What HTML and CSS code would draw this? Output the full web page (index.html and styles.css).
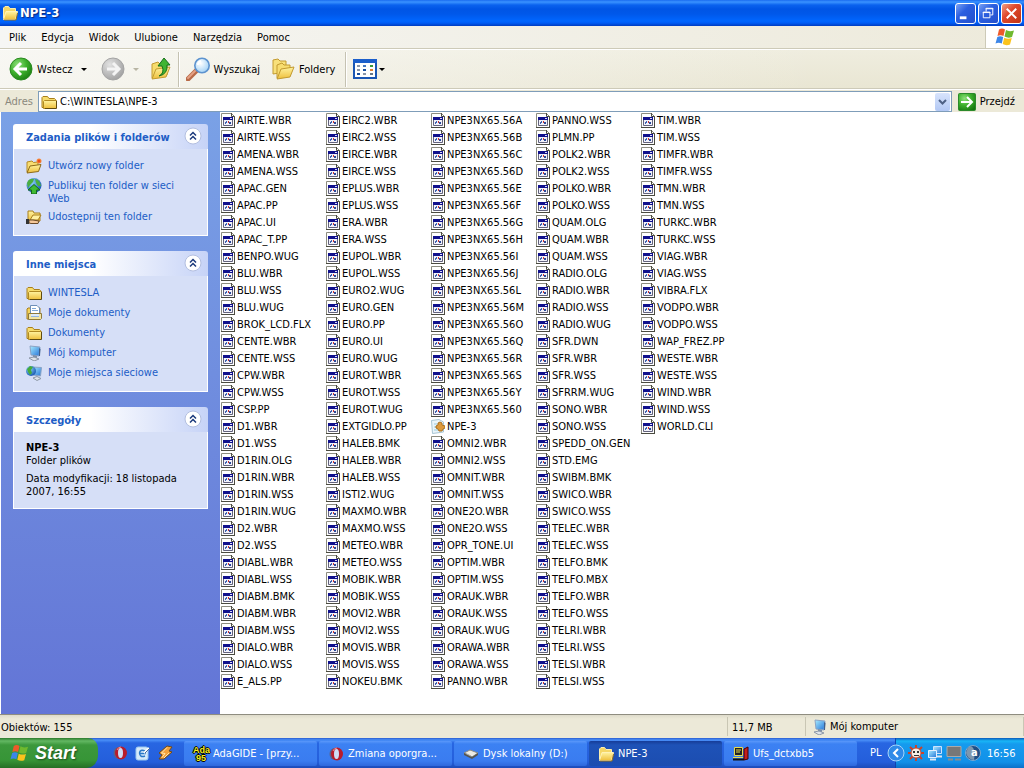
FILE: index.html
```html
<!DOCTYPE html>
<html lang="pl">
<head>
    <meta charset="UTF-8">
    <meta name="viewport" content="width=device-width, initial-scale=1.0">
    <title>NPE-3</title>
    <link rel="stylesheet" href="styles.css">
</head>
<body>
    <svg class="sprite" aria-hidden="true">
        <defs>
            <linearGradient id="gFolder" x1="0" y1="0" x2="0" y2="1">
                <stop offset="0" stop-color="#fff3a0"/>
                <stop offset="1" stop-color="#eebf3c"/>
            </linearGradient>
            <radialGradient id="gGreen" cx="0.35" cy="0.3" r="0.8">
                <stop offset="0" stop-color="#8ee07a"/>
                <stop offset="0.5" stop-color="#3db02c"/>
                <stop offset="1" stop-color="#16780f"/>
            </radialGradient>
            <radialGradient id="gGray" cx="0.35" cy="0.3" r="0.8">
                <stop offset="0" stop-color="#e2e2e2"/>
                <stop offset="1" stop-color="#9c9c9c"/>
            </radialGradient>
            <radialGradient id="gLens" cx="0.4" cy="0.35" r="0.7">
                <stop offset="0" stop-color="#ffffff"/>
                <stop offset="1" stop-color="#9fd0f5"/>
            </radialGradient>
            <linearGradient id="gScreen" x1="0" y1="0" x2="1" y2="1">
                <stop offset="0" stop-color="#a8ecff"/>
                <stop offset="1" stop-color="#2474d8"/>
            </linearGradient>
            <radialGradient id="gGlobe" cx="0.35" cy="0.3" r="0.8">
                <stop offset="0" stop-color="#8ad0ff"/>
                <stop offset="1" stop-color="#104fa8"/>
            </radialGradient>
        </defs>
        <symbol id="folder" viewBox="0 0 16 16">
            <path d="M1 13.500V3.500L2 2.500H6.500L8 4.500H13.500L14.500 5.500V13.500Z" fill="#f7dc6c" stroke="#a87f1c"/>
            <path d="M3.500 6.500H15.500V13.500L14.500 14.500H2.500V7.500Z" fill="url(#gFolder)" stroke="#b08a24"/>
            <path d="M4 14.500H15.500V7" fill="none" stroke="#5f4a10"/>
        </symbol>
        <symbol id="folder-open" viewBox="0 0 16 16">
            <path d="M1 13V3.500H6L7.500 5H13V13Z" fill="#f8dd70" stroke="#b58a26"/>
            <path d="M1 14.500L4 7.500H15.500L12.500 14.500Z" fill="url(#gFolder)" stroke="#a87f1c"/>
        </symbol>
        <symbol id="folder-light" viewBox="0 0 16 16">
            <path d="M1.500 13V3L3 1.500H6.500L8 3.500H13.500V13Z" fill="#f5d767" stroke="#fbeeb0"/>
            <path d="M1.500 14.500L4 6.500H15.500L13.500 14.500Z" fill="url(#gFolder)" stroke="#fff2b4"/>
            <path d="M2 15H14L15.500 8" fill="none" stroke="#94701c"/>
        </symbol>
        <symbol id="new-folder" viewBox="0 0 16 16">
            <path d="M1 14V4L6 3L7.500 4.500L12 4V12Z" fill="#f8dd70" stroke="#b58a26"/>
            <path d="M1 15L4 8L15 6.500L12.500 13.500Z" fill="url(#gFolder)" stroke="#8d6a18"/>
            <circle cx="13" cy="3" r="2.500" fill="#f58a3c"/>
            <circle cx="13" cy="3" r="1.500" fill="#ee4a18"/>
        </symbol>
        <symbol id="share" viewBox="0 0 16 16">
            <path d="M2 12V2H7L8 4H14V12Z" fill="url(#gFolder)" stroke="#a87f1c"/>
            <path d="M4 11L7 6H15L12 11Z" fill="#fff0a0" stroke="#a87f1c"/>
            <path d="M3 11H7L13 12L12 14.500H5L3 14Z" fill="#f5c89a" stroke="#6a4a2a"/>
            <path d="M0 10H3V15H0Z" fill="#343434"/>
        </symbol>
        <symbol id="publish" viewBox="0 0 16 16">
            <circle cx="8" cy="7.500" r="7.500" fill="url(#gGlobe)"/>
            <path d="M1 5Q3 0 8 1L7 4L4 7L2 10ZM9 1Q14 2 15 8L12 8L10 5Z" fill="#4aae42"/>
            <path d="M8 6.500L14 12H10.500V16H5.500V12H2Z" fill="#3fba34" stroke="#14691a"/>
        </symbol>
        <symbol id="my-docs" viewBox="0 0 16 16">
            <path d="M1 14V4L2 3H14V14Z" fill="#f3d35c" stroke="#a87f1c"/>
            <path d="M4.500 9V0.500H11L13.500 3V9Z" fill="#fff" stroke="#6d8fb8"/>
            <path d="M6 3.500H10M6 5.500H12" stroke="#7fa8d8"/>
            <path d="M2.500 8.500H15.500V13.500L14.500 14.500H2.500Z" fill="#f3e6a4" stroke="#8e7a3c"/>
            <path d="M5 9H13V12H5Z" fill="#dcebfb"/>
            <path d="M5 11.500H13" stroke="#93b5df"/>
        </symbol>
        <symbol id="computer" viewBox="0 0 16 16">
            <path d="M4 1L14 2L13 11L5 10Z" fill="url(#gScreen)" stroke="#8ba3c4"/>
            <path d="M13 3L14.500 4L14 11L13 11Z" fill="#3f5f8c"/>
            <path d="M7 10L11 11V13H7Z" fill="#7d8fa8"/>
            <path d="M3 13L8 12L13 14L8 16Z" fill="#dfe4ea" stroke="#8d98a8"/>
        </symbol>
        <symbol id="network" viewBox="0 0 16 16">
            <path d="M6 2L15.500 2.500L14.500 11L7 10Z" fill="url(#gScreen)" stroke="#8ba3c4"/>
            <path d="M7 13L11 11.500L15 13.500L11 15.500Z" fill="#dfe4ea" stroke="#8d98a8"/>
            <circle cx="5" cy="6" r="5" fill="url(#gGlobe)"/>
            <path d="M1 4L4 1L7 2L5 5L6 8L4 10L2 7Z" fill="#46ab3a"/>
        </symbol>
        <symbol id="two-pcs" viewBox="0 0 16 16">
            <path d="M6.500 1.500H14.500V8.500H6.500Z" fill="url(#gScreen)" stroke="#c9e2ff"/>
            <path d="M1.500 5.500H9.500V12.500H1.500Z" fill="url(#gScreen)" stroke="#e4f0ff"/>
            <path d="M3 14.500H9M10 11.500H15" stroke="#dbe6f4" stroke-width="2"/>
        </symbol>
        <symbol id="file" viewBox="0 0 14 16">
            <path d="M0.500 0.500H10.500L13.500 3.500V14.500H0.500Z" fill="#fff" stroke="#8c8c80"/>
            <path d="M10.500 0V3.500H13.500V15M0 14.500H14" fill="none" stroke="#4a4a40"/>
            <path d="M2.500 4.500H11.500V12.500H2.500Z" fill="#f2f2fa" stroke="#62627c"/>
            <path d="M2 4H12V7H2Z" fill="#10108c"/>
            <path d="M9 5H11V6H9Z" fill="#d8d8f0"/>
            <path d="M4 9H5V11H4ZM5 8H6V10H5Z" fill="#3d62b0"/>
            <path d="M7 8H8V10H7Z" fill="#c33"/>
            <path d="M8 9H10V11H8Z" fill="#2a4a9a"/>
        </symbol>
        <symbol id="reg-file" viewBox="0 0 14 16">
            <path d="M0.500 1.500L8 0.500L12.500 3V13L1.500 14.500Z" fill="#eaf5fa" stroke="#a8c6d4"/>
            <path d="M3 5H6M3 8H5M3 11H7" stroke="#9acbe0"/>
            <path d="M5 7L7 6V4L9 3L11 4V6L14 7V9L12 10L11 12H8L7 10L5 9Z" fill="#dd9a3c" stroke="#a8701f"/>
        </symbol>
        <symbol id="back" viewBox="0 0 24 24">
            <circle cx="12" cy="12" r="11" fill="url(#gGreen)" stroke="#2a8a20"/>
            <path d="M12 6L6 12L12 18M7 12H18" fill="none" stroke="#fff" stroke-width="3"/>
        </symbol>
        <symbol id="forward" viewBox="0 0 24 24">
            <circle cx="12" cy="12" r="11" fill="url(#gGray)" stroke="#a4a4a4"/>
            <path d="M12 6L18 12L12 18M17 12H6" fill="none" stroke="#f4f4f4" stroke-width="3"/>
        </symbol>
        <symbol id="up" viewBox="0 0 24 24">
            <path d="M3 21V7L9 5L11 7L18 6V18Z" fill="#f7dc6c" stroke="#c29a30"/>
            <path d="M3 22L7 12L21 10L17 20Z" fill="url(#gFolder)" stroke="#c29a30"/>
            <path d="M10 19Q16 16 13 9H9L15 1L21 8H18Q19 17 10 19Z" fill="#3fb432" stroke="#17701a"/>
        </symbol>
        <symbol id="search" viewBox="0 0 24 24">
            <path d="M2 22L10 14" stroke="#b96a48" stroke-width="5" stroke-linecap="round"/>
            <path d="M2 21L9 14" stroke="#e5a184" stroke-width="2" stroke-linecap="round"/>
            <circle cx="16" cy="8.500" r="7.200" fill="url(#gLens)" stroke="#5d93cf" stroke-width="1.600"/>
            <path d="M12 8Q12 5 15 4" fill="none" stroke="#fff" stroke-width="2"/>
        </symbol>
        <symbol id="folders" viewBox="0 0 24 24">
            <path d="M2 17V3L7 2L9 4H15V15Z" fill="#f8e07a" stroke="#c29a30"/>
            <path d="M6 21V8L11 6L13 8H19V19Z" fill="#f8dd70" stroke="#c29a30"/>
            <path d="M6 22L10 12L23 10L19 20Z" fill="url(#gFolder)" stroke="#c29a30"/>
        </symbol>
        <symbol id="views" viewBox="0 0 24 20">
            <path d="M1 1H23V19H1Z" fill="#fff" stroke="#1a56b4" stroke-width="2"/>
            <path d="M0 0H24V4H0Z" fill="#1c5fcb"/>
            <path d="M4 6H7V8H4ZM4 10H7V12H4ZM10 14H13V16H10Z" fill="#8a96a8"/>
            <path d="M10 6H13V8H10Z" fill="#4a78c0"/>
            <path d="M17 6H20V8H17Z" fill="#3a9a3a"/>
            <path d="M10 10H13V12H10ZM4 14H7V16H4Z" fill="#174d9e"/>
            <path d="M17 10H20V12H17Z" fill="#e08030"/>
            <path d="M17 14H20V16H17Z" fill="#667788"/>
        </symbol>
        <symbol id="go" viewBox="0 0 18 18">
            <rect x="0.500" y="0.500" width="17" height="17" rx="1" fill="url(#gGreen)" stroke="#2b8a2b"/>
            <path d="M9 4L14 9L9 14M13 9H3" fill="none" stroke="#fff" stroke-width="2"/>
        </symbol>
        <symbol id="flag" viewBox="0 0 20 18">
            <path d="M4 1.500Q7 -0.500 10 1.500L8.500 8Q5.500 6.500 2.500 8Z" fill="#ee5a2a"/>
            <path d="M11 2Q14 4 19 2.500L17 9Q13 10.500 9.500 8.500Z" fill="#6fb92e"/>
            <path d="M2.300 9Q5 7.500 8.200 9L6.800 15.500Q3.500 14 0.500 15.500Z" fill="#3c86e8"/>
            <path d="M9.200 9.700Q13 11.500 16.800 10L15 16.500Q11 18 7.700 16Z" fill="#fbc31c"/>
        </symbol>
        <symbol id="chevrons" viewBox="0 0 18 18">
            <circle cx="9" cy="9" r="8" fill="#fff" stroke="#b3bfe0"/>
            <path d="M6 8.500L9 5.500L12 8.500M6 12.500L9 9.500L12 12.500" fill="none" stroke="#1c3a7c" stroke-width="1.500"/>
        </symbol>
        <symbol id="opera" viewBox="0 0 16 16">
            <ellipse cx="6.500" cy="8" rx="5" ry="6" fill="#5a6288"/>
            <ellipse cx="9" cy="8" rx="6" ry="6.500" fill="#b81c2c"/>
            <ellipse cx="8.500" cy="8" rx="2.500" ry="5" fill="#cfdcf5"/>
            <path d="M5 5Q6 2 9 2" fill="none" stroke="#f08a90"/>
        </symbol>
        <symbol id="desktop" viewBox="0 0 16 16">
            <rect x="1" y="2" width="12" height="13" rx="2" fill="#d6eafa" stroke="#9cc8ee"/>
            <path d="M10 6Q5 4 4.500 8Q5 13 10 11M5 8.500H10V7" fill="none" stroke="#2a78c8" stroke-width="1.500"/>
            <path d="M9 8L14 3" stroke="#fff" stroke-width="2"/>
            <path d="M10 8L15 3" stroke="#4a6a98"/>
        </symbol>
        <symbol id="winamp" viewBox="0 0 16 16">
            <path d="M9 1L14 2L11 6L14 7L6 14L1 14L4 10L1 8Z" fill="#f3a23c" stroke="#6e4a1c"/>
            <path d="M9 2.500L3.500 8L7 8.500L4 12.500M11 8L6 13" fill="none" stroke="#ffe7b0"/>
        </symbol>
        <symbol id="drive" viewBox="0 0 16 16">
            <path d="M1 7L7 4L15 7L9 11Z" fill="#ecebe4" stroke="#8c8c84"/>
            <path d="M1 7V9L9 13L15 9V7L9 11Z" fill="#55554f"/>
            <path d="M3 7.500L8 10" stroke="#aaa"/>
        </symbol>
        <symbol id="ufs" viewBox="0 0 16 16">
            <path d="M1.500 1.500H9.500V9.500H1.500Z" fill="#222" stroke="#e8dc50"/>
            <path d="M3 4H8M3 6H7" stroke="#e8dc50"/>
            <path d="M0 11.500H10" stroke="#e8dc50"/>
            <path d="M0 13.500H11" stroke="#111" stroke-width="2"/>
            <path d="M11 3L15 1V13L11 14Z" fill="#c41e1e" stroke="#400"/>
        </symbol>
        <symbol id="bug" viewBox="0 0 16 16">
            <path d="M8 0V16M0 8H16M2 2L14 14M14 2L2 14" stroke="#c8442c" stroke-width="2"/>
            <circle cx="8" cy="8" r="5" fill="#f4eee4" stroke="#c8442c"/>
            <path d="M5 6H7V8H5ZM9 6H11V8H9ZM6 10H11V11H6Z" fill="#333"/>
        </symbol>
        <symbol id="monitor" viewBox="0 0 16 16">
            <path d="M1 1.500H15V11.500H1Z" fill="#777" stroke="#a9a9a9"/>
            <path d="M2 14.500H7M9 14.500H15" stroke="#8c8c8c" stroke-width="2"/>
        </symbol>
        <symbol id="ball" viewBox="0 0 16 16">
            <circle cx="8" cy="8" r="7.500" fill="#1f4f86" stroke="#7fa9d0"/>
            <path d="M5 1Q11 2 9 15Q3 15 1 8Q2 3 5 1Z" fill="#7f97ad"/>
        </symbol>
    </svg>

    <header class="titlebar">
        <svg class="icon"><use href="#folder-light"/></svg>
        <h1>NPE-3</h1>
        <button class="win-button" aria-label="Minimalizuj"><svg viewBox="0 0 20 20"><path d="M4 13H11V16H4Z" fill="#fff"/></svg></button>
        <button class="win-button" aria-label="Przywróć"><svg viewBox="0 0 20 20"><path d="M7.500 8V4.500H14.500V11.500H12M7 5H15M4.500 8.500H11.500V14.500H4.500ZM4 9H12" fill="none" stroke="#fff"/></svg></button>
        <button class="win-button close" aria-label="Zamknij"><svg viewBox="0 0 20 20"><path d="M5 5L15 15M15 5L5 15" stroke="#fff" stroke-width="2"/></svg></button>
    </header>

    <nav class="menubar">
        <button>Plik</button>
        <button>Edycja</button>
        <button>Widok</button>
        <button>Ulubione</button>
        <button>Narzędzia</button>
        <button>Pomoc</button>
        <span class="brand"><svg><use href="#flag"/></svg></span>
    </nav>

    <div class="toolbar">
        <button class="tool"><svg><use href="#back"/></svg>Wstecz<i class="arrow"></i></button>
        <button class="tool forward" aria-label="Dalej" disabled><svg><use href="#forward"/></svg><i class="arrow"></i></button>
        <button class="tool" aria-label="W górę"><svg><use href="#up"/></svg></button>
        <span class="divider"></span>
        <button class="tool search"><svg><use href="#search"/></svg>Wyszukaj</button>
        <button class="tool folders"><svg><use href="#folders"/></svg>Foldery</button>
        <span class="divider"></span>
        <button class="tool views" aria-label="Widoki"><svg><use href="#views"/></svg><i class="arrow"></i></button>
    </div>

    <div class="addressbar">
        <label for="adres">Adres</label>
        <div class="combo">
            <svg class="icon"><use href="#folder"/></svg>
            <input type="text" id="adres" value="C:\WINTESLA\NPE-3">
            <button aria-label="Rozwiń"><svg viewBox="0 0 15 18"><path d="M4 7L7.500 10.500L11 7" fill="none" stroke="#4d6185" stroke-width="2"/></svg></button>
        </div>
        <button class="go"><svg><use href="#go"/></svg>Przejdź</button>
    </div>

    <main class="main">
        <aside class="sidebar">
            <section class="panel">
                <div class="panel-head">
                    <h2>Zadania plików i folderów</h2>
                    <button aria-label="Zwiń"><svg><use href="#chevrons"/></svg></button>
                </div>
                <ul class="panel-body">
                    <li><svg class="icon"><use href="#new-folder"/></svg><a href="#">Utwórz nowy folder</a></li>
                    <li><svg class="icon"><use href="#publish"/></svg><a href="#">Publikuj ten folder w sieci Web</a></li>
                    <li><svg class="icon"><use href="#share"/></svg><a href="#">Udostępnij ten folder</a></li>
                </ul>
            </section>
            <section class="panel">
                <div class="panel-head">
                    <h2>Inne miejsca</h2>
                    <button aria-label="Zwiń"><svg><use href="#chevrons"/></svg></button>
                </div>
                <ul class="panel-body">
                    <li><svg class="icon"><use href="#folder"/></svg><a href="#">WINTESLA</a></li>
                    <li><svg class="icon"><use href="#my-docs"/></svg><a href="#">Moje dokumenty</a></li>
                    <li><svg class="icon"><use href="#folder"/></svg><a href="#">Dokumenty</a></li>
                    <li><svg class="icon"><use href="#computer"/></svg><a href="#">Mój komputer</a></li>
                    <li><svg class="icon"><use href="#network"/></svg><a href="#">Moje miejsca sieciowe</a></li>
                </ul>
            </section>
            <section class="panel">
                <div class="panel-head">
                    <h2>Szczegóły</h2>
                    <button aria-label="Zwiń"><svg><use href="#chevrons"/></svg></button>
                </div>
                <div class="panel-body details">
                    <p><b>NPE-3</b><br>Folder plików</p>
                    <p>Data modyfikacji: 18 listopada 2007, 16:55</p>
                </div>
            </section>
        </aside>
        <ul class="files" id="files"></ul>
    </main>

    <footer class="statusbar">
        <span class="count">Obiektów: 155</span>
        <span class="size">11,7 MB</span>
        <span class="zone"><svg class="icon"><use href="#computer"/></svg>Mój komputer</span>
    </footer>

    <div class="taskbar">
        <button class="start"><svg><use href="#flag"/></svg>Start</button>
        <div class="quick">
            <button aria-label="Opera"><svg class="icon"><use href="#opera"/></svg></button>
            <button aria-label="Pokaż pulpit"><svg class="icon"><use href="#desktop"/></svg></button>
            <button aria-label="Winamp"><svg class="icon"><use href="#winamp"/></svg></button>
        </div>
        <div class="tasks">
            <button class="task"><span class="ada">Ada<br>95</span><span>AdaGIDE - [przy...</span></button>
            <button class="task"><svg class="icon"><use href="#opera"/></svg><span>Zmiana oporgra...</span></button>
            <button class="task"><svg class="icon"><use href="#drive"/></svg><span>Dysk lokalny (D:)</span></button>
            <button class="task active"><svg class="icon"><use href="#folder-light"/></svg><span>NPE-3</span></button>
            <button class="task"><svg class="icon"><use href="#ufs"/></svg><span>Ufs_dctxbb5</span></button>
        </div>
        <span class="lang">PL</span>
        <div class="tray">
            <button class="tray-toggle" aria-label="Pokaż ukryte ikony"><svg viewBox="0 0 18 18"><circle cx="9" cy="9" r="8" fill="#2f8ae8" stroke="#a8d4fa"/><path d="M11 5L7 9L11 13" fill="none" stroke="#fff" stroke-width="2"/></svg></button>
            <svg class="icon"><use href="#bug"/></svg>
            <svg class="icon"><use href="#two-pcs"/></svg>
            <svg class="icon"><use href="#monitor"/></svg>
            <span class="ball"><svg class="icon"><use href="#ball"/></svg><b>a</b></span>
            <span class="clock">16:56</span>
        </div>
    </div>

    <script>
        const files = `
            AIRTE.WBR AIRTE.WSS AMENA.WBR AMENA.WSS APAC.GEN APAC.PP APAC.UI APAC_T.PP BENPO.WUG
            BLU.WBR BLU.WSS BLU.WUG BROK_LCD.FLX CENTE.WBR CENTE.WSS CPW.WBR CPW.WSS CSP.PP
            D1.WBR D1.WSS D1RIN.OLG D1RIN.WBR D1RIN.WSS D1RIN.WUG D2.WBR D2.WSS DIABL.WBR
            DIABL.WSS DIABM.BMK DIABM.WBR DIABM.WSS DIALO.WBR DIALO.WSS E_ALS.PP
            EIRC2.WBR EIRC2.WSS EIRCE.WBR EIRCE.WSS EPLUS.WBR EPLUS.WSS ERA.WBR ERA.WSS EUPOL.WBR
            EUPOL.WSS EURO2.WUG EURO.GEN EURO.PP EURO.UI EURO.WUG EUROT.WBR EUROT.WSS EUROT.WUG
            EXTGIDLO.PP HALEB.BMK HALEB.WBR HALEB.WSS ISTI2.WUG MAXMO.WBR MAXMO.WSS METEO.WBR METEO.WSS
            MOBIK.WBR MOBIK.WSS MOVI2.WBR MOVI2.WSS MOVIS.WBR MOVIS.WSS NOKEU.BMK
            NPE3NX65.56A NPE3NX65.56B NPE3NX65.56C NPE3NX65.56D NPE3NX65.56E NPE3NX65.56F
            NPE3NX65.56G NPE3NX65.56H NPE3NX65.56I NPE3NX65.56J NPE3NX65.56L NPE3NX65.56M
            NPE3NX65.56O NPE3NX65.56Q NPE3NX65.56R NPE3NX65.56S NPE3NX65.56Y NPE3NX65.560
            NPE-3 OMNI2.WBR OMNI2.WSS OMNIT.WBR OMNIT.WSS ONE2O.WBR ONE2O.WSS OPR_TONE.UI
            OPTIM.WBR OPTIM.WSS ORAUK.WBR ORAUK.WSS ORAUK.WUG ORAWA.WBR ORAWA.WSS PANNO.WBR
            PANNO.WSS PLMN.PP POLK2.WBR POLK2.WSS POLKO.WBR POLKO.WSS QUAM.OLG QUAM.WBR QUAM.WSS
            RADIO.OLG RADIO.WBR RADIO.WSS RADIO.WUG SFR.DWN SFR.WBR SFR.WSS SFRRM.WUG SONO.WBR
            SONO.WSS SPEDD_ON.GEN STD.EMG SWIBM.BMK SWICO.WBR SWICO.WSS TELEC.WBR TELEC.WSS
            TELFO.BMK TELFO.MBX TELFO.WBR TELFO.WSS TELRI.WBR TELRI.WSS TELSI.WBR TELSI.WSS
            TIM.WBR TIM.WSS TIMFR.WBR TIMFR.WSS TMN.WBR TMN.WSS TURKC.WBR TURKC.WSS VIAG.WBR
            VIAG.WSS VIBRA.FLX VODPO.WBR VODPO.WSS WAP_FREZ.PP WESTE.WBR WESTE.WSS WIND.WBR
            WIND.WSS WORLD.CLI
        `.trim().split(/\s+/);

        document.getElementById('files').innerHTML = files.map(name => {
            const icon = name === 'NPE-3' ? 'reg-file' : 'file';
            return `<li><svg><use href="#${icon}"/></svg>${name}</li>`;
        }).join('');
    </script>
</body>
</html>
```

FILE: styles.css
```css
* {
    box-sizing: border-box;
}
body {
    margin: 0;
    min-height: 100vh;
    display: flex;
    flex-direction: column;
    font-family: "DejaVu Sans Condensed", "DejaVu Sans", sans-serif;
    font-stretch: condensed;
    font-size: 11px;
    line-height: 13px;
    color: #000;
    background-color: #ece9d8;
}
button {
    font: inherit;
    color: inherit;
    border: none;
    background: none;
    padding: 0;
    display: flex;
    align-items: center;
}
ul {
    list-style: none;
    margin: 0;
    padding: 0;
}
svg {
    flex: none;
}
.sprite {
    position: absolute;
    width: 0;
    height: 0;
}
.icon {
    width: 16px;
    height: 16px;
}

/* title bar */
.titlebar {
    display: flex;
    align-items: center;
    gap: 2px;
    height: 26px;
    padding: 0 2px;
    background: linear-gradient(#1a6cf0 0, #3a93ff 2px, #0a62ee 5px, #0055e5 9px, #0058ea 14px, #0066ff 21px, #005cf5 23px, #003cc0 26px);
}
.titlebar h1 {
    flex: 1;
    margin: 0;
    font-size: 13px;
    line-height: 16px;
    color: #fff;
    text-shadow: 1px 1px 1px #0a2a80;
}
.win-button {
    width: 21px;
    height: 21px;
    border: 1px solid #fff;
    border-radius: 3px;
    background: linear-gradient(135deg, #7aa2f4, #2b5fe0 40%, #2450cc);
}
.win-button svg {
    width: 19px;
    height: 19px;
}
.win-button.close {
    background: linear-gradient(135deg, #f0a088, #e0492c 40%, #c03414);
}

/* menu and toolbar */
.menubar {
    display: flex;
    height: 23px;
    padding-left: 9px;
    gap: 15px;
    background: linear-gradient(90deg, #f6f6f4, #edeadb);
    border-bottom: 1px solid #cdcab8;
}
.brand {
    display: flex;
    align-items: center;
    justify-content: center;
    width: 39px;
    margin-left: auto;
    background-color: #fff;
    border-left: 1px solid #cdcab8;
}
.brand svg {
    width: 20px;
    height: 18px;
}
.toolbar {
    display: flex;
    align-items: center;
    height: 40px;
    padding-left: 9px;
    border-top: 1px solid #fff;
    border-bottom: 1px solid #cdcab8;
    background: linear-gradient(90deg, rgba(250, 250, 248, 0.8), rgba(250, 250, 248, 0) 80%), linear-gradient(#efeddf, #e9e6d3);
}
.tool {
    gap: 4px;
    margin-right: 14px;
}
.tool svg {
    width: 24px;
    height: 24px;
}
.tool.views {
    gap: 2px;
}
.tool.views svg {
    height: 20px;
}
.tool.forward {
    gap: 8px;
    margin-right: 10px;
}
.tool.search {
    margin-right: 11px;
}
.tool.folders {
    margin-right: 10px;
}
.tool.forward + .tool {
    margin-right: 5px;
}
.arrow {
    border: 3px solid transparent;
    border-top-color: #000;
    border-bottom: 0;
}
.tool .arrow {
    margin-left: 4px;
}
.tool.forward .arrow {
    margin-left: 0;
    border-top-color: #b8b5a4;
}
.tool.views .arrow {
    margin-left: 0;
}
.divider {
    width: 2px;
    height: 35px;
    margin-right: 6px;
    border-left: 1px solid #c5c2b2;
    border-right: 1px solid #fff;
}
.addressbar {
    display: flex;
    align-items: center;
    height: 23px;
    padding: 1px 9px 0 5px;
    border-top: 1px solid #fff;
}
.addressbar label {
    width: 33px;
    color: #8a887c;
}
.combo {
    flex: 1;
    display: flex;
    align-items: center;
    height: 21px;
    padding: 0 1px 0 2px;
    background-color: #fff;
    border: 1px solid #7f9db9;
}
.combo input {
    flex: 1;
    min-width: 0;
    border: none;
    outline: none;
    padding: 0 3px;
    font: inherit;
}
.combo button {
    width: 15px;
    height: 18px;
    border-radius: 2px;
    background: linear-gradient(#d8e4fc, #b2c8f4);
}
.go {
    margin-left: 6px;
    gap: 4px;
}
.go svg {
    width: 18px;
    height: 18px;
}

/* explorer body */
.main {
    flex: 1;
    display: flex;
    padding-left: 1px;
    background-color: #fff;
}
.sidebar {
    width: 219px;
    padding: 12px 12px 0;
    background: linear-gradient(#7aa1e6, #6375d6);
}
.panel {
    margin-bottom: 15px;
}
.panel-head {
    display: flex;
    align-items: center;
    height: 25px;
    padding: 0 6px 2px 13px;
    border-radius: 3px 3px 0 0;
    background: linear-gradient(90deg, #fff 40%, #c6d3f7);
}
.panel-head h2 {
    flex: 1;
    margin: 0;
    font-size: 11px;
    color: #215dc6;
    padding-top: 4px;
    white-space: nowrap;
}
.panel-head svg {
    width: 18px;
    height: 18px;
}
.panel-body {
    display: flex;
    flex-direction: column;
    gap: 4px;
    padding: 9px 12px 10px;
    border: 1px solid #fff;
    border-top: none;
    background-color: #d6dff7;
}
.panel-body li {
    display: flex;
    gap: 6px;
    min-height: 16px;
}
.panel-body a {
    color: #215dc6;
    text-decoration: none;
    padding-top: 1px;
    width: 130px;
}
.details p {
    margin: 0;
}
.details {
    gap: 5px;
}
.files {
    flex: 1;
    display: grid;
    grid-auto-flow: column;
    grid-template-rows: repeat(34, 17px);
    grid-auto-columns: 105px;
    padding: 0 1px;
}
.files li {
    display: flex;
    align-items: center;
    gap: 2px;
    white-space: nowrap;
}
.files svg {
    width: 14px;
    height: 16px;
}

/* status bar */
.statusbar {
    display: flex;
    align-items: stretch;
    height: 24px;
    border-top: 1px solid #8f8d80;
    background: linear-gradient(#dedbcb, #ece9d8 4px);
}
.statusbar span {
    border-right: 1px solid #c9c6b4;
    margin: 2px 0;
    line-height: 21px;
}
.count {
    flex: 1;
    padding-left: 1px;
}
.size {
    width: 78px;
    padding-left: 4px;
}
.zone {
    display: flex;
    align-items: center;
    gap: 3px;
    width: 218px;
    padding-left: 5px;
}

/* task bar */
.taskbar {
    display: flex;
    height: 30px;
    color: #fff;
    background: linear-gradient(#2a5cd0 0, #4a90f8 2px, #2866e2 5px, #245edb 24px, #1d4bb8 30px);
}
.start {
    width: 98px;
    padding: 0 0 1px 10px;
    gap: 6px;
    font-family: "Liberation Sans", sans-serif;
    font-stretch: normal;
    font-size: 18px;
    font-weight: bold;
    font-style: italic;
    line-height: 20px;
    text-shadow: 1px 1px 2px #1a4a1a;
    border-radius: 0 10px 12px 0;
    background: linear-gradient(#2c7a2c 0, #63b863 3px, #3c983c 7px, #379537 22px, #256f25 30px);
}
.start svg {
    width: 19px;
    height: 18px;
}
.quick {
    display: flex;
    align-items: center;
    gap: 7px;
    width: 86px;
    padding-left: 14px;
}
.tasks {
    flex: 1;
    display: flex;
    gap: 2px;
    padding: 3px 0 2px;
}
.task {
    flex: 1;
    max-width: 133px;
    gap: 4px;
    padding-left: 9px;
    white-space: nowrap;
    border-radius: 2px;
    background: linear-gradient(#5a98fa 0, #3c81f3 3px, #3a7cf0 20px, #2f68dc 25px);
}
.task.active {
    background: linear-gradient(#163c98 0, #1e52b7 4px, #1c4db0);
}
.ada {
    width: 16px;
    font-family: "Liberation Sans", sans-serif;
    font-stretch: normal;
    font-size: 9px;
    font-weight: bold;
    line-height: 8px;
    text-align: center;
    color: #f8ee20;
    text-shadow: 1px 0 0 #000, -1px 0 0 #000, 0 1px 0 #000, 0 -1px 0 #000;
}
.lang {
    width: 25px;
    line-height: 30px;
}
.tray {
    display: flex;
    align-items: center;
    gap: 3px;
    width: 129px;
    border-left: 1px solid #1042af;
    background: linear-gradient(#0c59b9 0, #18b6f6 3px, #159bee 6px, #1290e8 24px, #0c70c8 30px);
}
.tray-toggle {
    margin-left: -9px;
}
.tray-toggle svg {
    width: 18px;
    height: 18px;
}
.ball {
    position: relative;
    display: flex;
}
.ball b {
    position: absolute;
    left: 6px;
    top: 1px;
}
.clock {
    margin-left: 3px;
}
```
